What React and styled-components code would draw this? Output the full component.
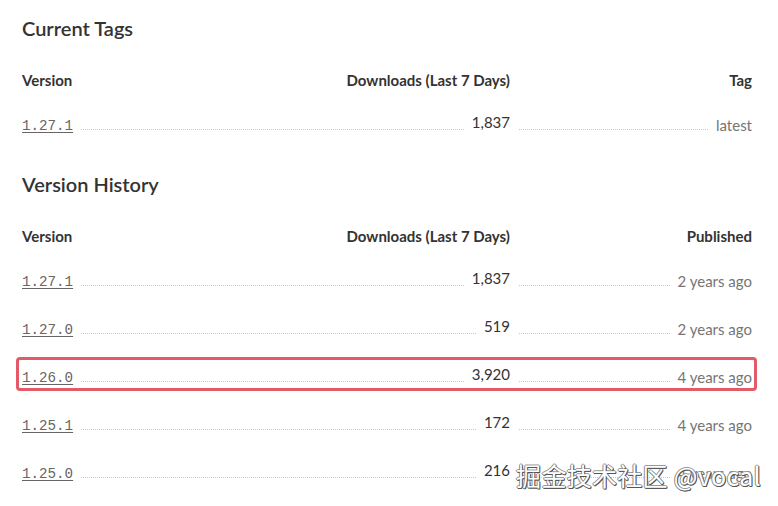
import styled, { createGlobalStyle } from 'styled-components';

const GlobalStyle = createGlobalStyle`
  html, body {
    margin: 0;
    padding: 0;
    background: #fff;
  }
  body {
    font-family: Lato, "Noto Sans", sans-serif;
    color: #333;
  }
`;

const Page = styled.div`
  position: relative;
  width: 778px;
  height: 506px;
  box-sizing: border-box;
  padding: 16px 26px 0 22px;
  overflow: hidden;
`;

const Heading = styled.h2`
  margin: ${(p) => (p.$first ? '0' : '24px')} 0 30px;
  font-size: 20px;
  line-height: 24px;
  font-weight: 600;
  color: #333;
`;

const Table = styled.div`
  display: grid;
  grid-template-columns: 1fr 242px;
`;

const HeadCell = styled.div`
  font-size: 15px;
  line-height: 20px;
  font-weight: 700;
  color: #333;
  display: flex;
  justify-content: ${(p) => (p.$split ? 'space-between' : 'flex-end')};
  margin-bottom: 10px;
`;

const Row = styled.div`
  grid-column: 1 / -1;
  display: grid;
  grid-template-columns: 1fr 242px;
  height: 48px;
  align-items: center;
  position: relative;

  ${(p) =>
    p.$highlight &&
    `
    &::after {
      content: '';
      position: absolute;
      left: -6px;
      right: -5px;
      top: 5px;
      bottom: 9px;
      border: 3px solid #e45b68;
      border-radius: 4px;
      pointer-events: none;
    }
  `}
`;

const Cell = styled.div`
  display: flex;
  align-items: baseline;
  padding-left: ${(p) => (p.$right ? '9px' : '0')};
`;

const VersionLink = styled.a`
  font-family: "Liberation Mono", "DejaVu Sans Mono", monospace;
  font-size: 14.2px;
  color: #666;
  text-decoration: underline;
  text-underline-offset: 2px;
`;

const Leader = styled.span`
  flex: 1;
  margin: 0 8px;
  border-bottom: 1px dotted #c8c8c8;
  ${(p) => p.$after && 'margin-left: 0;'}
`;

const Count = styled.span`
  font-size: 15px;
  color: #333;
  position: relative;
  top: -2px;
`;

const Meta = styled.span`
  font-size: 15px;
  color: #757575;
  position: relative;
  top: 1px;
`;

const Watermark = styled.div`
  position: absolute;
  right: 17px;
  bottom: 16px;
  font-family: "Noto Sans CJK SC", "Noto Sans", sans-serif;
  font-size: 25px;
  line-height: 30px;
  color: #fff;
  letter-spacing: 0.3px;
  text-shadow: 1px 1px 0 #555, -1px 0 0 #888, 0 -1px 0 #999, 1px 0 0 #666, 0 1px 0 #555;
`;

const current = [{ version: '1.27.1', downloads: '1,837', tag: 'latest' }];

const history = [
  { version: '1.27.1', downloads: '1,837', published: '2 years ago' },
  { version: '1.27.0', downloads: '519', published: '2 years ago' },
  { version: '1.26.0', downloads: '3,920', published: '4 years ago', highlight: true },
  { version: '1.25.1', downloads: '172', published: '4 years ago' },
  { version: '1.25.0', downloads: '216', published: '4 years ago' },
];

function VersionRow({ version, downloads, meta, highlight }) {
  return (
    <Row $highlight={highlight}>
      <Cell>
        <VersionLink href="#">{version}</VersionLink>
        <Leader />
        <Count>{downloads}</Count>
      </Cell>
      <Cell $right>
        <Leader $after />
        <Meta>{meta}</Meta>
      </Cell>
    </Row>
  );
}

export default function App() {
  return (
    <>
      <GlobalStyle />
      <Page>
        <Heading $first>Current Tags</Heading>
        <Table>
          <HeadCell $split>
            <span>Version</span>
            <span>Downloads (Last 7 Days)</span>
          </HeadCell>
          <HeadCell>Tag</HeadCell>
          {current.map((r) => (
            <VersionRow key={r.version} version={r.version} downloads={r.downloads} meta={r.tag} />
          ))}
        </Table>

        <Heading>Version History</Heading>
        <Table>
          <HeadCell $split>
            <span>Version</span>
            <span>Downloads (Last 7 Days)</span>
          </HeadCell>
          <HeadCell>Published</HeadCell>
          {history.map((r) => (
            <VersionRow
              key={r.version}
              version={r.version}
              downloads={r.downloads}
              meta={r.published}
              highlight={r.highlight}
            />
          ))}
        </Table>
        <Watermark>掘金技术社区 @vocal</Watermark>
      </Page>
    </>
  );
}
